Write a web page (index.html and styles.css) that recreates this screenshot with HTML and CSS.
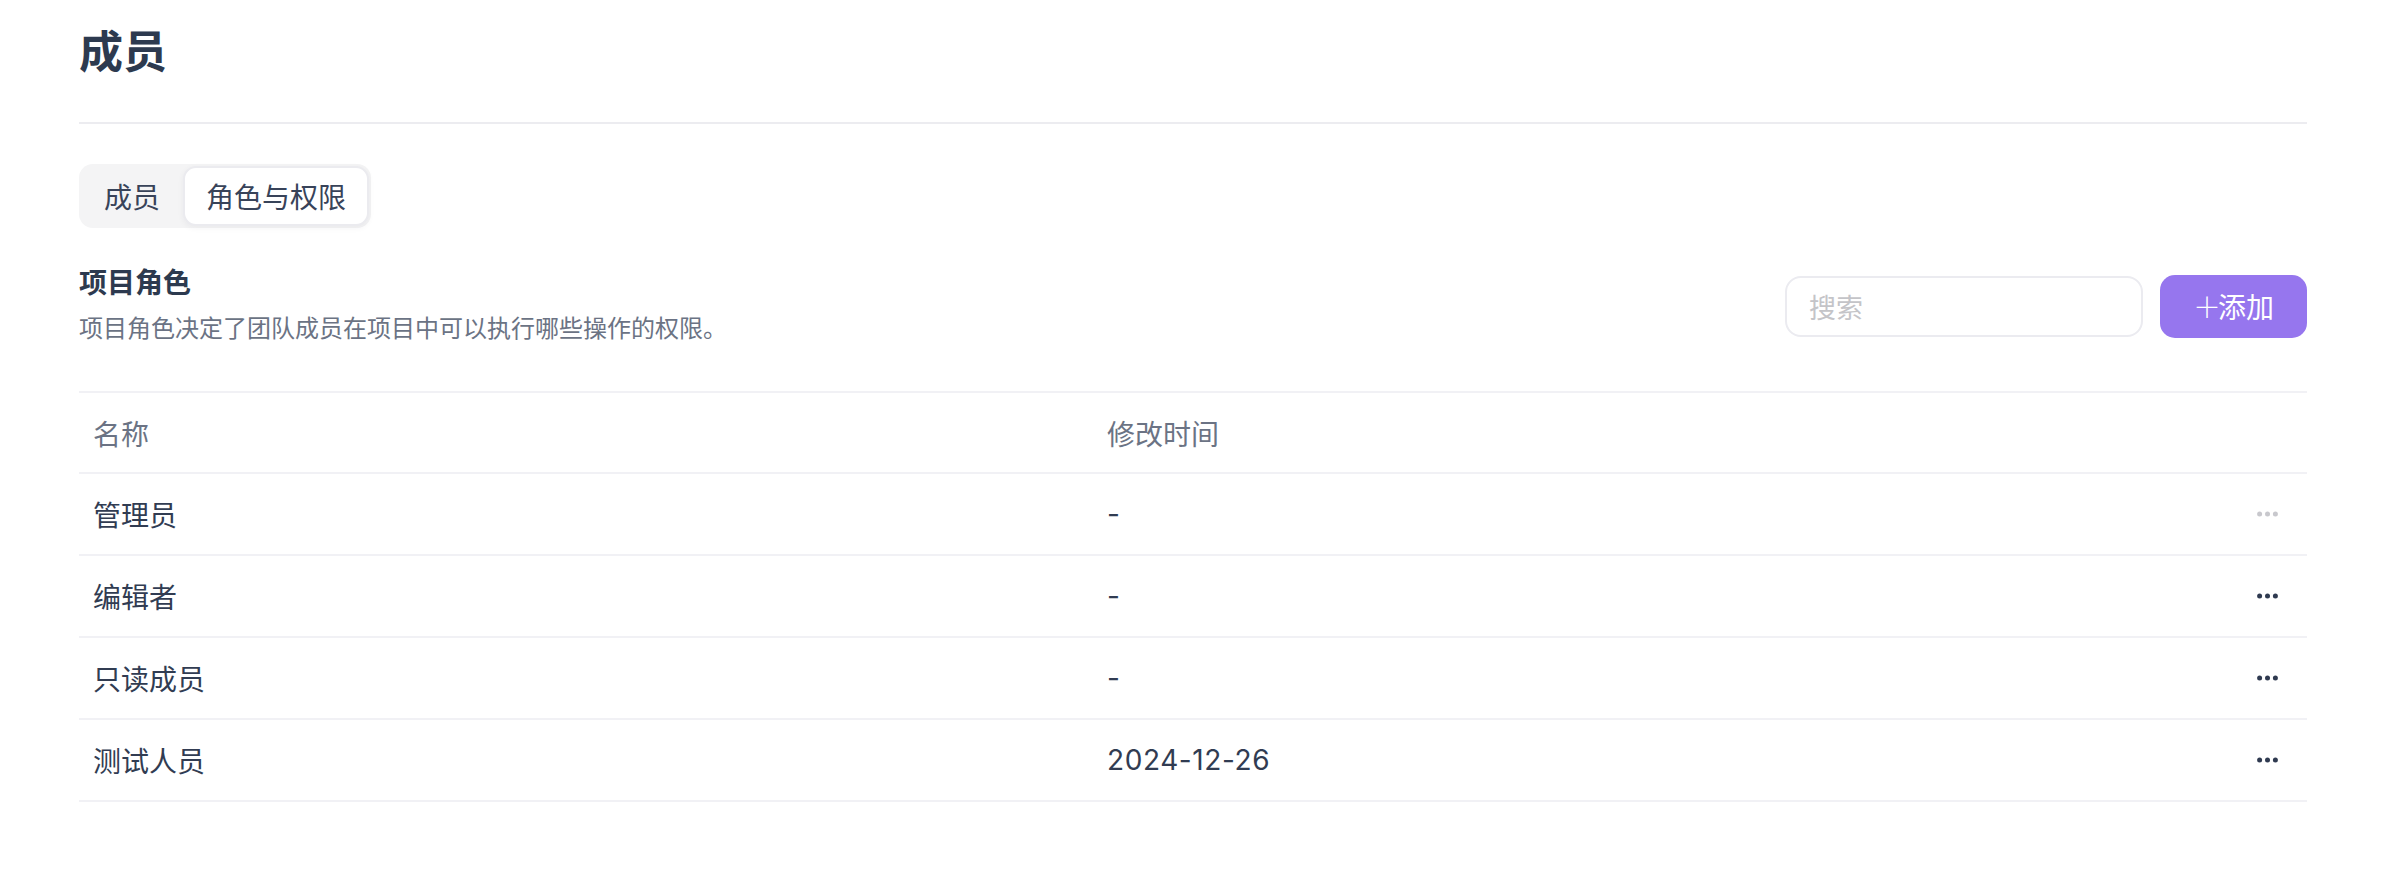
FILE: index.html
```html
<!DOCTYPE html>
<html lang="zh-CN">
<head>
<meta charset="utf-8">
<title>成员</title>
<link rel="stylesheet" href="styles.css">
</head>
<body>
<div class="page">
  <h1 class="title">成员</h1>
  <div class="divider"></div>
  <div class="tabs">
    <div class="tab">成员</div>
    <div class="tab active">角色与权限</div>
  </div>
  <div class="section-head">
    <div class="section-text">
      <div class="section-title">项目角色</div>
      <div class="section-desc">项目角色决定了团队成员在项目中可以执行哪些操作的权限。</div>
    </div>
    <div class="actions">
      <div class="search">搜索</div>
      <div class="add-btn"><span class="plus">＋</span>添加</div>
    </div>
  </div>
  <div class="table">
    <div class="row head">
      <div class="cell">名称</div>
      <div class="cell">修改时间</div>
      <div class="cell"></div>
    </div>
    <div class="row">
      <div class="cell">管理员</div>
      <div class="cell date">-</div>
      <div class="cell more disabled"><svg width="21" height="6" viewBox="0 0 21 6"><circle cx="2.6" cy="3" r="2.5"/><circle cx="10.5" cy="3" r="2.5"/><circle cx="18.4" cy="3" r="2.5"/></svg></div>
    </div>
    <div class="row">
      <div class="cell">编辑者</div>
      <div class="cell date">-</div>
      <div class="cell more"><svg width="21" height="6" viewBox="0 0 21 6"><circle cx="2.6" cy="3" r="2.5"/><circle cx="10.5" cy="3" r="2.5"/><circle cx="18.4" cy="3" r="2.5"/></svg></div>
    </div>
    <div class="row">
      <div class="cell">只读成员</div>
      <div class="cell date">-</div>
      <div class="cell more"><svg width="21" height="6" viewBox="0 0 21 6"><circle cx="2.6" cy="3" r="2.5"/><circle cx="10.5" cy="3" r="2.5"/><circle cx="18.4" cy="3" r="2.5"/></svg></div>
    </div>
    <div class="row last">
      <div class="cell">测试人员</div>
      <div class="cell date">2024-12-26</div>
      <div class="cell more"><svg width="21" height="6" viewBox="0 0 21 6"><circle cx="2.6" cy="3" r="2.5"/><circle cx="10.5" cy="3" r="2.5"/><circle cx="18.4" cy="3" r="2.5"/></svg></div>
    </div>
  </div>
</div>
</body>
</html>
```

FILE: styles.css
```css
* { box-sizing: border-box; }
html, body { margin: 0; padding: 0; background: #ffffff; }
body {
  font-family: "Inter", "Noto Sans CJK SC", sans-serif;
  color: #313c52;
}
.page {
  padding: 20px 81px 0 79px;
}
.title {
  margin: 0;
  font-size: 44px;
  line-height: 64px;
  font-weight: 700;
  color: #2d3a4f;
}
.divider {
  margin-top: 38px;
  height: 2px;
  background: #ececf0;
}
.tabs {
  margin-top: 40px;
  display: inline-flex;
  padding: 2px;
  background: #f4f4f5;
  border-radius: 14px;
  height: 64px;
}
.tab {
  display: flex;
  align-items: center;
  padding: 0 23px;
  font-size: 28px;
  color: #384359;
  border-radius: 13px;
}
.tab.active {
  background: #ffffff;
  border: 2px solid #ebebef;
  padding: 0 21px;
  box-shadow: 0 2px 6px rgba(30, 30, 60, 0.05);
}
.section-head {
  margin-top: 35px;
  display: flex;
  align-items: center;
  justify-content: space-between;
}
.section-title {
  font-size: 28px;
  line-height: 40px;
  font-weight: 600;
  color: #2d3a4f;
}
.section-desc {
  margin-top: 8px;
  font-size: 24px;
  line-height: 36px;
  color: #6b7384;
}
.actions {
  display: flex;
  align-items: center;
  gap: 17px;
  padding-top: 2px;
}
.search {
  width: 358px;
  height: 61px;
  border: 2px solid #ebebf0;
  border-radius: 16px;
  padding: 0 22px;
  display: flex;
  align-items: center;
  font-size: 27px;
  color: #c4c4c8;
}
.add-btn {
  width: 147px;
  height: 63px;
  border-radius: 15px;
  background: #9676ee;
  color: #ffffff;
  font-size: 28px;
  display: flex;
  align-items: center;
  justify-content: center;
}
.plus {
  font-family: "Noto Sans CJK SC", sans-serif;
  font-weight: 300;
  margin-right: -3px;
}
.table {
  margin-top: 44px;
}
.row {
  display: grid;
  grid-template-columns: 1014px 1fr 100px;
  height: 82px;
  border-top: 2px solid #f1f1f5;
  align-items: center;
}
.row.head { height: 81px; }
.row.last { border-bottom: 2px solid #f1f1f5; height: 84px; }
.cell {
  padding-left: 14px;
  font-size: 28px;
  color: #313c52;
}
.cell.date { letter-spacing: 0.6px; }
.row.head .cell { color: #6b7384; }
.cell.more {
  padding-left: 0;
  padding-right: 29px;
  display: flex;
  justify-content: flex-end;
  align-items: center;
}
.cell.more svg { fill: #2f3a50; display: block; }
.cell.more.disabled svg { fill: #c8c8cd; }
```
